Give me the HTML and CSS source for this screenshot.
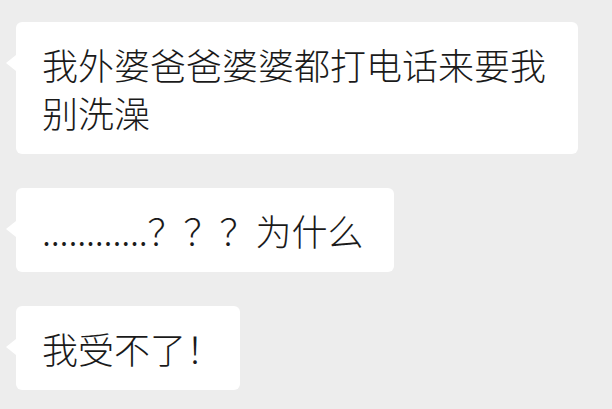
FILE: index.html
```
<!DOCTYPE html>
<html lang="zh-CN">
<head>
<meta charset="utf-8">
<link rel="stylesheet" href="styles.css">
</head>
<body>
<div class="chat">
  <div class="bubble bubble--wide">我外婆爸爸婆婆都打电话来要我别洗澡</div>
  <div class="bubble"><span class="dots">............</span>？？？为什么</div>
  <div class="bubble bubble--tight">我受不了！</div>
</div>
</body>
</html>
```

FILE: styles.css
```
html, body {
  margin: 0;
  padding: 0;
  background: #ededed;
}
body {
  width: 612px;
  height: 409px;
  overflow: hidden;
}
.chat {
  display: flex;
  flex-direction: column;
  align-items: flex-start;
  gap: 34px;
  padding: 22px 0 0 16px;
}
.bubble {
  position: relative;
  box-sizing: border-box;
  background: #ffffff;
  border-radius: 6px;
  padding: 18px 30px 18px 26px;
  font-family: "Noto Sans CJK SC", "Noto Sans", sans-serif;
  font-weight: 300;
  font-size: 36px;
  line-height: 48px;
  color: #1a1a1a;
}
.bubble::before {
  content: "";
  position: absolute;
  left: -10px;
  top: 33px;
  width: 0;
  height: 0;
  border-top: 8px solid transparent;
  border-bottom: 8px solid transparent;
  border-right: 10px solid #ffffff;
}
.dots {
  letter-spacing: -0.2px;
}
.bubble--wide {
  width: 562px;
}
.bubble--tight {
  padding-right: 18px;
}
```
